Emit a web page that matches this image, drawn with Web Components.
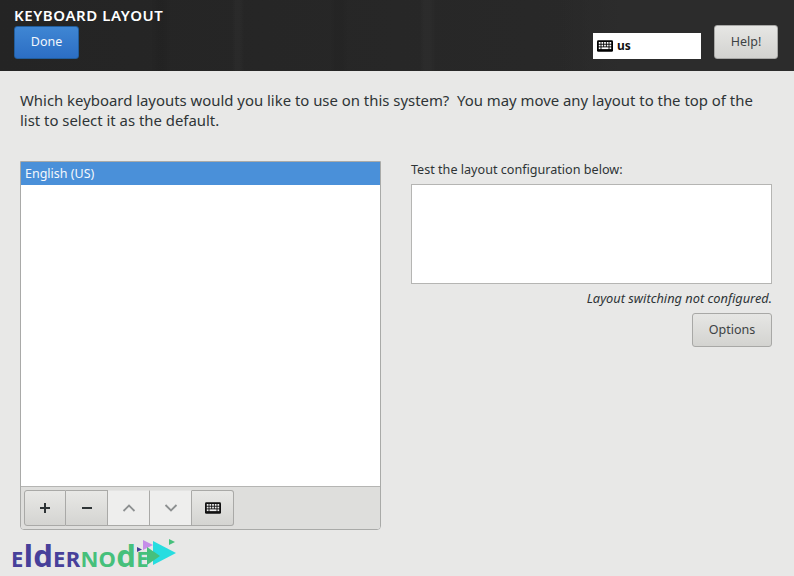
<!DOCTYPE html>
<html>
<head>
<meta charset="utf-8">
<title>Keyboard layout</title>
<style>
  html, body { margin: 0; padding: 0; }
  body { width: 794px; height: 576px; overflow: hidden; background: #e8e8e7; font-family: "Noto Sans", "Open Sans", sans-serif; }
</style>
</head>
<body>
<keyboard-screen></keyboard-screen>
<script>
const KEYBOARD_ICON = (size, fg, bg) => `
  <svg width="${size}" height="${Math.round(size * 0.72)}" viewBox="0 0 18 13" aria-hidden="true">
    <rect width="18" height="13" rx="1.5" fill="${bg}"/>
    <g fill="${fg}">
      <rect x="2" y="2" width="2" height="2"/><rect x="5" y="2" width="2" height="2"/><rect x="8" y="2" width="2" height="2"/><rect x="11" y="2" width="2" height="2"/><rect x="14" y="2" width="2" height="2"/>
      <rect x="2" y="5" width="2" height="2"/><rect x="5" y="5" width="2" height="2"/><rect x="8" y="5" width="2" height="2"/><rect x="11" y="5" width="2" height="2"/><rect x="14" y="5" width="2" height="2"/>
      <rect x="2" y="8" width="2" height="2"/><rect x="5" y="8" width="8" height="2"/><rect x="14" y="8" width="2" height="2"/>
    </g>
  </svg>`

class Top_bar extends HTMLElement {
  constructor() {
    super()
    this.attachShadow({ mode: "open" })
  }
  connectedCallback() {
    this.shadowRoot.innerHTML = `
      <style>
        :host {
          display: flex;
          justify-content: space-between;
          box-sizing: border-box;
          height: 71px;
          padding: 0 16px 0 14px;
          color: white;
          background:
            linear-gradient(90deg, transparent 0 560px, #2c2c2c 620px),
            linear-gradient(90deg, transparent 0 150px, rgba(0,0,0,.07) 158px 164px, transparent 172px 232px, rgba(255,255,255,.02) 236px 240px, transparent 244px 330px, rgba(0,0,0,.06) 336px 342px, transparent 348px 420px, rgba(255,255,255,.02) 424px 430px, transparent 436px),
            linear-gradient(90deg, #242424, #2a2a2a);
        }
        .left { display: flex; flex-direction: column; align-items: flex-start; padding-top: 6px; }
        h1 { margin: 0 0 2px; font: 600 15px/18px "Noto Sans", sans-serif; letter-spacing: .58px; color: white; }
        .right { display: flex; align-items: flex-start; gap: 13px; padding-top: 25px; }
        .layout {
          display: flex; align-items: center; gap: 4px;
          box-sizing: border-box; width: 108px; height: 26px; margin-top: 8px;
          padding: 0 0 1px 4px; background: white; color: #111;
          font: 700 12px "Noto Sans", sans-serif;
        }
      </style>
      <div class="left">
        <h1>KEYBOARD LAYOUT</h1>
        <gnome-button kind="primary" style="--w:65px;--h:33px">Done</gnome-button>
      </div>
      <div class="right">
        <div class="layout">${KEYBOARD_ICON(16, "#fff", "#000")}<span>us</span></div>
        <gnome-button style="--w:64px;--h:34px">Help!</gnome-button>
      </div>
    `
  }
}
customElements.define("top-bar", Top_bar)

class Gnome_button extends HTMLElement {
  constructor() {
    super()
    this.attachShadow({ mode: "open" })
  }
  connectedCallback() {
    const primary = this.getAttribute("kind") === "primary"
    this.shadowRoot.innerHTML = `
      <style>
        :host { display: inline-block; }
        button {
          display: block;
          box-sizing: border-box;
          width: var(--w);
          height: var(--h);
          padding: 0 0 2px;
          border-radius: 3px;
          font: 12.5px "Noto Sans", sans-serif;
          border: 1px solid ${primary ? "#215d9c" : "#a8a8a6"};
          color: ${primary ? "#f2f7fc" : "#3d4244"};
          background: ${primary ? "linear-gradient(#3f86d3, #2c6ec4)" : "linear-gradient(#e6e6e4, #d3d3d0)"};
        }
      </style>
      <button><slot></slot></button>
    `
  }
}
customElements.define("gnome-button", Gnome_button)

class Layout_list extends HTMLElement {
  constructor() {
    super()
    this.attachShadow({ mode: "open" })
  }
  connectedCallback() {
    this.shadowRoot.innerHTML = `
      <style>
        :host {
          display: flex;
          flex-direction: column;
          box-sizing: border-box;
          width: 361px;
          height: 369px;
          border: 1px solid #a9aaa8;
          border-radius: 0 0 4px 4px;
          background: white;
        }
        .row {
          height: 23px; line-height: 24px; padding-left: 4px;
          background: #4a90d9; color: #f4f8fc; font-size: 12.5px;
        }
        .space { flex: 1; }
        .toolbar {
          display: flex;
          height: 43px;
          box-sizing: border-box;
          padding: 3px 3px 3px;
          border-top: 1px solid #b5b5b3;
          border-radius: 0 0 3px 3px;
          background: #dededc;
        }
        .tool {
          display: flex; align-items: center; justify-content: center;
          box-sizing: border-box; width: 42px; height: 36px;
          border: 1px solid #a9a9a7; border-left: 0;
          background: linear-gradient(#e8e8e6, #d4d4d1);
        }
        .tool:first-child { border-left: 1px solid #a9a9a7; border-radius: 3px 0 0 3px; }
        .tool:last-child { border-radius: 0 3px 3px 0; }
        .tool.off { background: #eeeeed; border-top-color: #e4e4e3; }
      </style>
      <div class="row">English (US)</div>
      <div class="space"></div>
      <div class="toolbar">
        <div class="tool"><svg width="12" height="12" viewBox="0 0 12 12"><path d="M6 1v10M1 6h10" stroke="#2e3436" stroke-width="2"/></svg></div>
        <div class="tool"><svg width="12" height="12" viewBox="0 0 12 12"><path d="M1 6h10" stroke="#2e3436" stroke-width="2"/></svg></div>
        <div class="tool off"><svg width="14" height="10" viewBox="0 0 14 10"><path d="M1.500 8 7 2.500 12.500 8" fill="none" stroke="#8d9091" stroke-width="1.800"/></svg></div>
        <div class="tool off"><svg width="14" height="10" viewBox="0 0 14 10"><path d="M1.500 2 7 7.500 12.500 2" fill="none" stroke="#8d9091" stroke-width="1.800"/></svg></div>
        <div class="tool">${KEYBOARD_ICON(16, "#eee", "#111")}</div>
      </div>
    `
  }
}
customElements.define("layout-list", Layout_list)

class Test_panel extends HTMLElement {
  constructor() {
    super()
    this.attachShadow({ mode: "open" })
  }
  connectedCallback() {
    this.shadowRoot.innerHTML = `
      <style>
        :host { display: flex; flex-direction: column; width: 361px; color: #2e3436; font-size: 12.6px; }
        label { line-height: 16px; padding-top: 1px; margin: 0 0 6px; }
        .input { box-sizing: border-box; height: 100px; background: white; border: 1px solid #b5b5b3; }
        em { text-align: right; line-height: 16px; margin: 6px 0 7px; font-size: 12.8px; }
        .actions { display: flex; justify-content: flex-end; }
      </style>
      <label>Test the layout configuration below:</label>
      <div class="input"></div>
      <em>Layout switching not configured.</em>
      <div class="actions"><gnome-button style="--w:80px;--h:34px">Options</gnome-button></div>
    `
  }
}
customElements.define("test-panel", Test_panel)

class Elder_logo extends HTMLElement {
  constructor() {
    super()
    this.attachShadow({ mode: "open" })
  }
  connectedCallback() {
    this.shadowRoot.innerHTML = `
      <style>
        :host { position: absolute; left: 0; top: 536px; display: block; width: 180px; height: 40px; }
        .word {
          position: absolute; left: 11px; top: 2px;
          font: 700 22px/40px "Noto Sans", sans-serif;
          letter-spacing: .3px;
          color: #46c07b;
          white-space: nowrap;
        }
        .word b { color: #47409a; font-weight: 700; }
        .word i { font-style: normal; font-size: 31px; line-height: 0; }
        svg { position: absolute; left: 130px; top: 0; }
      </style>
      <div class="word"><b>E<i>ld</i>ER</b>NO<i>d</i>E</div>
      <svg width="50" height="32" viewBox="0 0 50 32">
        <path d="M7 11 12 13.500 7 16Z" fill="#47409a"/>
        <path d="M13 4 23 9 13 14Z" fill="#c58de8"/>
        <path d="M23 5 46 17 23 29Z" fill="#27dde0"/>
        <path d="M39 3 45 6 39 9Z" fill="#46c07b"/>
        <path d="M17 11 30 20 17 29Z" fill="#46c07b"/>
      </svg>
    `
  }
}
customElements.define("elder-logo", Elder_logo)

class Keyboard_screen extends HTMLElement {
  constructor() {
    super()
    this.attachShadow({ mode: "open" })
  }
  connectedCallback() {
    this.shadowRoot.innerHTML = `
      <style>
        :host { display: block; color: #2e3436; font-family: "Noto Sans", "Open Sans", sans-serif; }
        main { padding: 19px 20px 0; }
        p { margin: 0 0 31px; font-size: 14.9px; line-height: 20px; color: #2e3436; }
        .columns { display: flex; gap: 30px; }
      </style>
      <top-bar></top-bar>
      <main>
        <p>Which keyboard layouts would you like to use on this system?&nbsp; You may move any layout to the top of the list to select it as the default.</p>
        <div class="columns">
          <layout-list></layout-list>
          <test-panel></test-panel>
        </div>
      </main>
      <elder-logo></elder-logo>
    `
  }
}
customElements.define("keyboard-screen", Keyboard_screen)
</script>
</body>
</html>
